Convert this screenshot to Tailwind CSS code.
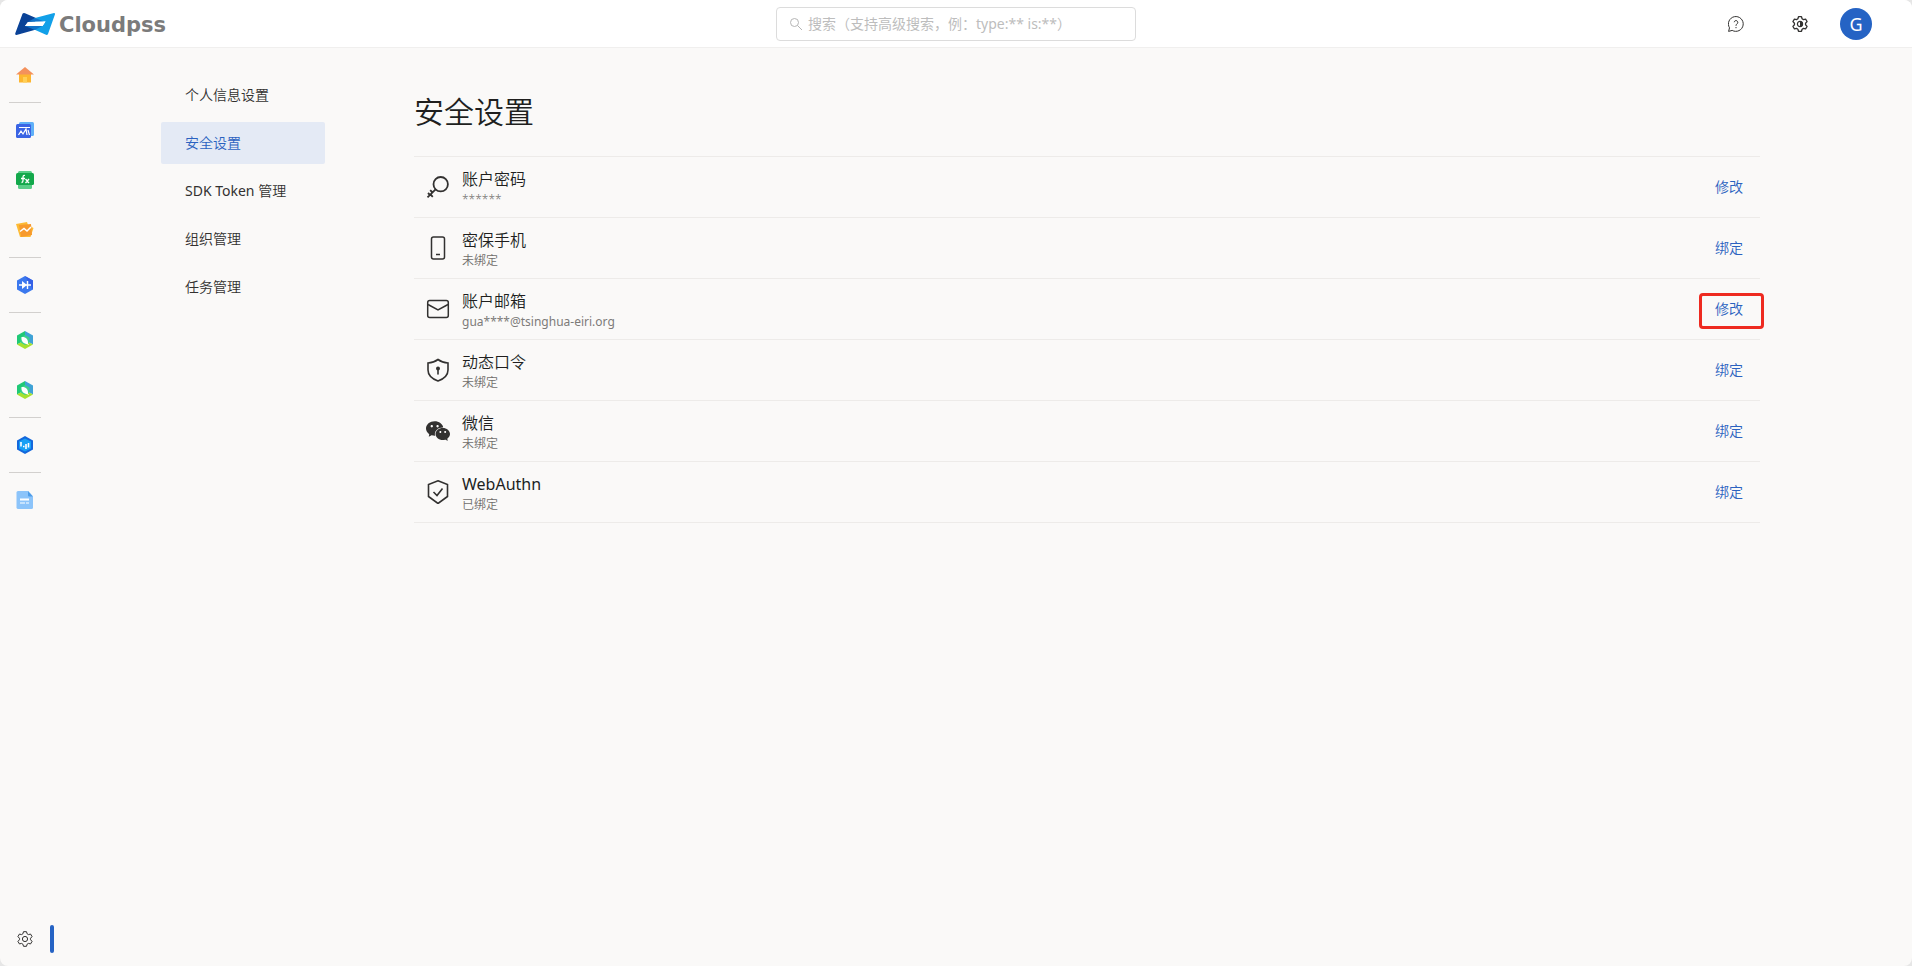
<!DOCTYPE html>
<html lang="zh-CN">
<head>
<meta charset="utf-8">
<title>安全设置 - CloudPSS</title>
<script src="https://cdn.jsdelivr.net/npm/@tailwindcss/browser@4"></script>
</head>
<body class="bg-[#e6e6e6] text-sm font-[350] text-[#323130] font-['Noto_Sans','Noto_Sans_CJK_SC',sans-serif]">
<svg class="hidden" aria-hidden="true">
  <symbol id="gear" viewBox="-8 -8 16 16"><path d="M-1.5-7.3h3l.6 2.1 1.35.78 2.12-.53 1.5 2.6-1.52 1.57v1.56l1.52 1.57-1.5 2.6-2.12-.53-1.35.78-.6 2.1h-3l-.6-2.1-1.35-.78-2.12.53-1.5-2.6 1.52-1.57v-1.56l-1.52-1.57 1.5-2.6 2.12.53 1.35-.78z" fill="none" stroke="currentColor" stroke-linejoin="round"/></symbol>
  <symbol id="leaf" viewBox="0 0 18 18">
    <path d="M9 0 1 4.500v9L9 9z" fill="#1fc977"/><path d="M9 0l8 4.500v9L9 9z" fill="#3fa2d6"/><path d="M1 13.500L9 18l8-4.500L9 9z" fill="#a5e22f"/>
    <path d="M9 4l4.500 2.500v5L9 14l-4.500-2.500v-5z" fill="#3ccf8e"/>
    <path d="M5.500 6c4-.5 7 2 6.500 7-4 .2-7-2-6.500-7z" fill="#fff"/><path d="M11 12l1.500 2" stroke="#fff"/>
  </symbol>
</svg>
<div class="flex min-h-screen flex-col overflow-hidden rounded-lg bg-[#faf9f8]">
  <header class="flex h-12 items-center justify-between border-b border-[#f0efee] bg-white">
    <a href="#" class="flex flex-1 items-center gap-1 pr-[25px] pl-[15px]" aria-label="CloudPSS">
      <svg class="h-[22px] w-10" viewBox="0 0 40 22" aria-hidden="true">
        <path d="M9 0q.6 0 1 .2L21 5l-1 4h-7l-3 4h11l2 3L1.500 22Q0 22 .2 20.500L7.500.8Q8 0 9 0z" fill="#0a4297"/>
        <path d="M39 0q1.200 0 1 1.200L33 21q-.6 1.200-2 .8L18 16l-4-3h13.500l3-4.500H17L20 5z" fill="#12a0e8"/>
        <path d="M13 8.800L20 5l9 3.500z" fill="#1273c9"/><path d="M10 13h17l-7 4z" fill="#1273c9"/>
        <path d="M13 9l17.500-.5-3 4.500H10z" fill="#fff"/>
      </svg>
      <span class="pt-0.5 font-['DejaVu_Sans'] text-[21px] leading-5 font-bold text-[#7b7b7b]">Cloudpss</span>
    </a>
    <label class="flex h-[34px] w-[360px] items-center gap-1.5 rounded-sm border border-[#dcdcdc] px-[13px] text-[#b5b5b5]">
      <svg class="size-3 shrink-0" viewBox="0 0 12 12" fill="none" stroke="currentColor" aria-hidden="true"><circle cx="4.500" cy="4.500" r="4"/><path d="M7.500 7.500L12 12"/></svg>
      <input type="search" aria-label="搜索" placeholder="搜索（支持高级搜索，例：type:** is:**）" class="w-full bg-transparent font-normal outline-none placeholder:text-[#bdbdbd]">
    </label>
    <div class="flex flex-1 items-center justify-end pr-10">
      <button class="mr-12 size-4" aria-label="帮助"><svg class="size-4" viewBox="0 0 16 16" fill="none" stroke="currentColor" aria-hidden="true"><path d="M1.500 11.800A7.400 7.400 0 1 1 4.200 14.400L.6 15.400z"/><path d="M6.200 6.200a1.800 1.800 0 1 1 2.900 1.600C8.300 8.500 8 8.700 8 9.800M8 11v1.200"/></svg></button>
      <button class="mr-8 size-4" aria-label="设置"><svg class="size-4" viewBox="-8 -8 16 16" aria-hidden="true"><use href="#gear" x="-8" y="-8" width="16" height="16" stroke-width="1.300"/><circle r="2.600" fill="none" stroke="currentColor" stroke-width="1.200"/><path d="M0-3a3 3 0 0 1 0 6z" fill="currentColor"/></svg></button>
      <button class="size-8 rounded-full bg-[#2563c4] text-lg leading-8 font-normal text-white">G</button>
    </div>
  </header>
  <div class="flex flex-1">
    <nav aria-label="应用" class="flex w-[50px] shrink-0 flex-col pt-0.5 pb-0.5">
      <a href="#" aria-label="主页" class="grid h-[50px] place-items-center"><svg class="size-[18px]" viewBox="0 0 18 18"><path d="M3 7h12v9.500H3z" fill="#fdb62f"/><path d="M7 11h4v5.500H7z" fill="#ffcf55"/><path d="M9 1l9 7.500H0z" fill="#f4915c"/></svg></a>
      <hr class="mx-[9px] my-0.5 border-[#d2d0ce]">
      <a href="#" aria-label="仿真" class="grid h-[50px] place-items-center"><svg class="size-[18px]" viewBox="0 0 18 18"><rect x="3" y="1" width="15" height="14" rx="1.500" fill="#5fb0f8"/><rect y="3" width="15" height="14" rx="1.500" fill="#3a64e4"/><path d="M3 6.500h11M2.500 14l2.500-4 2 3 3-5 1 6M12 9l1.500 5" stroke="#fff" fill="none" stroke-width="1.200"/></svg></a>
      <a href="#" aria-label="函数" class="grid h-[50px] place-items-center"><svg class="size-[18px]" viewBox="0 0 18 18"><rect x="2" width="14" height="18" rx="1.500" fill="#59cd87"/><rect y="2" width="18" height="12" rx="1.500" fill="#13a84b"/><path d="M9 4.500c-2-.6-2 1-2 2.500v2.500c0 1.500-.5 2-1.500 2M5 7.500h4M9.500 8l3.500 4M13 8l-3.500 4" stroke="#fff" fill="none" stroke-width="1.300"/></svg></a>
      <a href="#" aria-label="数据" class="grid h-[50px] place-items-center"><svg class="size-[18px]" viewBox="0 0 18 18"><path d="M0 3l11-2 1 3 5.500 3-3 9H4z" fill="#fdbb35"/><path d="M3 4l12-1 1 11-11 2z" fill="#f79a2d"/><path d="M4 10.500l4-3 3 2.500 4-4" stroke="#fff" fill="none" stroke-width="1.500"/></svg></a>
      <hr class="mx-[9px] my-0.5 border-[#d2d0ce]">
      <a href="#" aria-label="电路" class="grid h-[50px] place-items-center"><svg class="size-[18px]" viewBox="0 0 18 18"><path d="M9 0l8 4.500v9L9 18l-8-4.500v-9z" fill="#3b78ee"/><path d="M9 0l8 4.500v9z" fill="#3560e6"/><path d="M6 5l5 4-5 4z" fill="#fff"/><path d="M3 9h12M11.500 5v8" stroke="#fff" stroke-width="1.400"/></svg></a>
      <hr class="mx-[9px] my-0.5 border-[#d2d0ce]">
      <a href="#" aria-label="综合能源" class="grid h-[50px] place-items-center"><svg class="size-[18px]"><use href="#leaf"/></svg></a>
      <a href="#" aria-label="能源规划" class="grid h-[50px] place-items-center"><svg class="size-[18px]"><use href="#leaf"/></svg></a>
      <hr class="mx-[9px] my-0.5 border-[#d2d0ce]">
      <a href="#" aria-label="数字孪生" class="grid h-[50px] place-items-center"><svg class="size-[18px]" viewBox="0 0 18 18"><path d="M9 0l8 4.500v9L9 18l-8-4.500v-9z" fill="#1467dc"/><path d="M9 2.500l6 3v7l-6 3-6-3v-7z" fill="#16a0f5"/><path d="M5 6v4.500M7 10.500h1.500M10 8v5M12.500 7v4.500" stroke="#fff" stroke-width="1.600"/></svg></a>
      <hr class="mx-[9px] my-0.5 border-[#d2d0ce]">
      <a href="#" aria-label="文档" class="grid h-[50px] place-items-center"><svg class="size-[18px]" viewBox="0 0 18 18"><path d="M2 0h10l5 5.500V16.500q0 1.500-1.500 1.500h-13Q.5 18 .5 16.500v-15Q.5 0 2 0z" fill="#8cc4fa"/><path d="M12 0l5 5.500h-4q-1 0-1-1z" fill="#4f9de9"/><path d="M4 7.500h9v2H4zM4 11.500h5v1H4zM10 11.500h3v1h-3z" fill="#fff"/></svg></a>
      <a href="#" aria-label="系统设置" class="relative mt-auto grid h-[50px] place-items-center"><svg class="size-4" viewBox="-8 -8 16 16"><use href="#gear" x="-8" y="-8" width="16" height="16"/><circle r="2.600" fill="none" stroke="currentColor"/></svg><span class="absolute top-[11px] left-full h-7 w-1 rounded-sm bg-[#2563c4]"></span></a>
    </nav>
    <div class="flex flex-1 pr-[152px] pl-[111px]">
      <nav aria-label="设置" class="flex w-[164px] shrink-0 flex-col gap-1.5 pt-[26px]">
        <a href="#" class="px-6 leading-[42px]">个人信息设置</a>
        <a href="#" aria-current="page" class="rounded-xs bg-[#e4eaf5] px-6 leading-[42px] text-[#2b62c0]">安全设置</a>
        <a href="#" class="px-6 leading-[42px]"><span class="font-normal">SDK Token </span>管理</a>
        <a href="#" class="px-6 leading-[42px]">组织管理</a>
        <a href="#" class="px-6 leading-[42px]">任务管理</a>
      </nav>
      <main class="ml-[89px] flex-1 pt-11">
        <h1 class="text-[30px] leading-10 text-[#201f1e]">安全设置</h1>
        <ul class="mt-6 border-t border-[#edebe9]">
          <li class="flex h-[61px] items-center border-b border-[#edebe9] pr-[17px] pl-3">
            <svg class="size-6" viewBox="0 0 24 24" fill="none" stroke="currentColor" stroke-width="1.800" aria-hidden="true"><circle cx="14.700" cy="9.200" r="7.200"/><path d="M9.600 14.300L1.500 22.400M6.500 17.500l-2.300-2.300M4.500 19.500l2.300 2.300M4 20l-2-2"/></svg>
            <div class="ml-3 flex-1 pt-1"><h2 class="text-base leading-[22px] text-[#201f1e]">账户密码</h2><p class="text-xs leading-5 text-[#6f6d6b]">******</p></div>
            <button class="text-[#2b62c0]">修改</button>
          </li>
          <li class="flex h-[61px] items-center border-b border-[#edebe9] pr-[17px] pl-3">
            <svg class="size-6" viewBox="0 0 24 24" fill="none" stroke="currentColor" stroke-width="1.500" aria-hidden="true"><rect x="5.500" y="1" width="13" height="22" rx="2"/><path d="M10 18.500h4"/></svg>
            <div class="ml-3 flex-1 pt-1"><h2 class="text-base leading-[22px] text-[#201f1e]">密保手机</h2><p class="text-xs leading-5 text-[#6f6d6b]">未绑定</p></div>
            <button class="text-[#2b62c0]">绑定</button>
          </li>
          <li class="flex h-[61px] items-center border-b border-[#edebe9] pr-[17px] pl-3">
            <svg class="size-6" viewBox="0 0 24 24" fill="none" stroke="currentColor" stroke-width="1.500" aria-hidden="true"><rect x="1.700" y="3.500" width="20.600" height="17" rx="2"/><path d="M2 7.500l10 5.500 10-5.500"/></svg>
            <div class="ml-3 flex-1 pt-1"><h2 class="text-base leading-[22px] text-[#201f1e]">账户邮箱</h2><p class="text-xs leading-5 font-normal text-[#7d7b79]">gua****@tsinghua-eiri.org</p></div>
            <div class="relative flex"><button class="text-[#2b62c0]">修改</button><span class="pointer-events-none absolute -top-[6px] -right-[21px] h-9 w-[65px] rounded-sm border-3 border-[#ee2a20]"></span></div>
          </li>
          <li class="flex h-[61px] items-center border-b border-[#edebe9] pr-[17px] pl-3">
            <svg class="size-6" viewBox="0 0 24 24" fill="none" stroke="currentColor" stroke-width="1.600" aria-hidden="true"><path d="M12 1.500c3 2.300 6.200 3.300 10 3.500v7c0 5.500-4.500 9-10 11C6.500 21 2 17.500 2 12V5c3.800-.2 7-1.200 10-3.500z"/><circle cx="12" cy="10.500" r="2" fill="currentColor" stroke="none"/><path d="M12 11v5" stroke-width="1.600" stroke-linecap="round"/></svg>
            <div class="ml-3 flex-1 pt-1"><h2 class="text-base leading-[22px] text-[#201f1e]">动态口令</h2><p class="text-xs leading-5 text-[#6f6d6b]">未绑定</p></div>
            <button class="text-[#2b62c0]">绑定</button>
          </li>
          <li class="flex h-[61px] items-center border-b border-[#edebe9] pr-[17px] pl-3">
            <svg class="size-6" viewBox="64 64 896 896" fill="currentColor" aria-hidden="true"><path d="M690.1 377.4c5.9 0 11.8.2 17.6.5-24.4-128.7-158.3-227.1-319.9-227.1C209 150.8 64 271.4 64 420.2c0 81.1 43.6 154.2 111.9 203.6a21.5 21.5 0 0 1 9.1 17.6c0 2.4-.5 4.6-1.100 6.9-5.500 20.300-14.200 52.800-14.600 54.300-.7 2.600-1.700 5.200-1.700 7.900 0 5.900 4.800 10.800 10.800 10.800 2.300 0 4.200-.9 6.200-2l70.900-40.900c5.300-3.100 11-5 17.200-5 3.200 0 6.400.5 9.500 1.400 33.100 9.500 68.800 14.800 105.700 14.800 6 0 11.900-.1 17.800-.4-7.100-21-10.900-43.100-10.900-66 0-135.800 132.200-245.800 295.300-245.800zm-194.300-86.500c23.800 0 43.200 19.300 43.200 43.100s-19.300 43.100-43.200 43.100c-23.800 0-43.200-19.300-43.200-43.100s19.400-43.100 43.200-43.100zm-215.900 86.200c-23.800 0-43.200-19.300-43.200-43.100s19.300-43.100 43.200-43.100 43.200 19.300 43.200 43.100-19.400 43.100-43.200 43.100zm586.800 415.600c56.900-41.200 93.200-102 93.200-169.700 0-124-120.800-224.500-269.900-224.500-149 0-269.900 100.500-269.900 224.500S540.900 847.500 690 847.500c30.800 0 60.600-4.400 88.100-12.300 2.600-.8 5.200-1.200 7.900-1.200 5.200 0 9.900 1.600 14.300 4.100l59.100 34c1.700 1 3.300 1.700 5.200 1.700a9 9 0 0 0 6.400-2.600 9 9 0 0 0 2.600-6.400c0-2.200-.9-4.400-1.400-6.600-.3-1.200-7.600-28.300-12.200-45.300-.5-1.900-.9-3.800-.9-5.700.1-5.900 3.100-11.200 7.600-14.500zM600.200 587.200c-19.900 0-36-16.100-36-35.900 0-19.800 16.100-35.900 36-35.900s36 16.100 36 35.900c0 19.800-16.200 35.900-36 35.900zm179.900 0c-19.900 0-36-16.100-36-35.900 0-19.800 16.100-35.900 36-35.900s36 16.100 36 35.900a36.080 36.080 0 0 1-36 35.900z"/></svg>
            <div class="ml-3 flex-1 pt-1"><h2 class="text-base leading-[22px] text-[#201f1e]">微信</h2><p class="text-xs leading-5 text-[#6f6d6b]">未绑定</p></div>
            <button class="text-[#2b62c0]">绑定</button>
          </li>
          <li class="flex h-[61px] items-center border-b border-[#edebe9] pr-[17px] pl-3">
            <svg class="size-6" viewBox="0 0 24 24" fill="none" stroke="currentColor" stroke-width="1.600" aria-hidden="true"><path d="M12 .8l9.500 3.700v12L12 23.500l-9.500-7v-12z"/><path d="M7.500 12l3.500 3.500 5.500-7"/></svg>
            <div class="ml-3 flex-1 pt-1"><h2 class="text-base leading-[22px] font-normal text-[#201f1e]">WebAuthn</h2><p class="text-xs leading-5 text-[#6f6d6b]">已绑定</p></div>
            <button class="text-[#2b62c0]">绑定</button>
          </li>
        </ul>
      </main>
    </div>
  </div>
</div>
</body>
</html>
